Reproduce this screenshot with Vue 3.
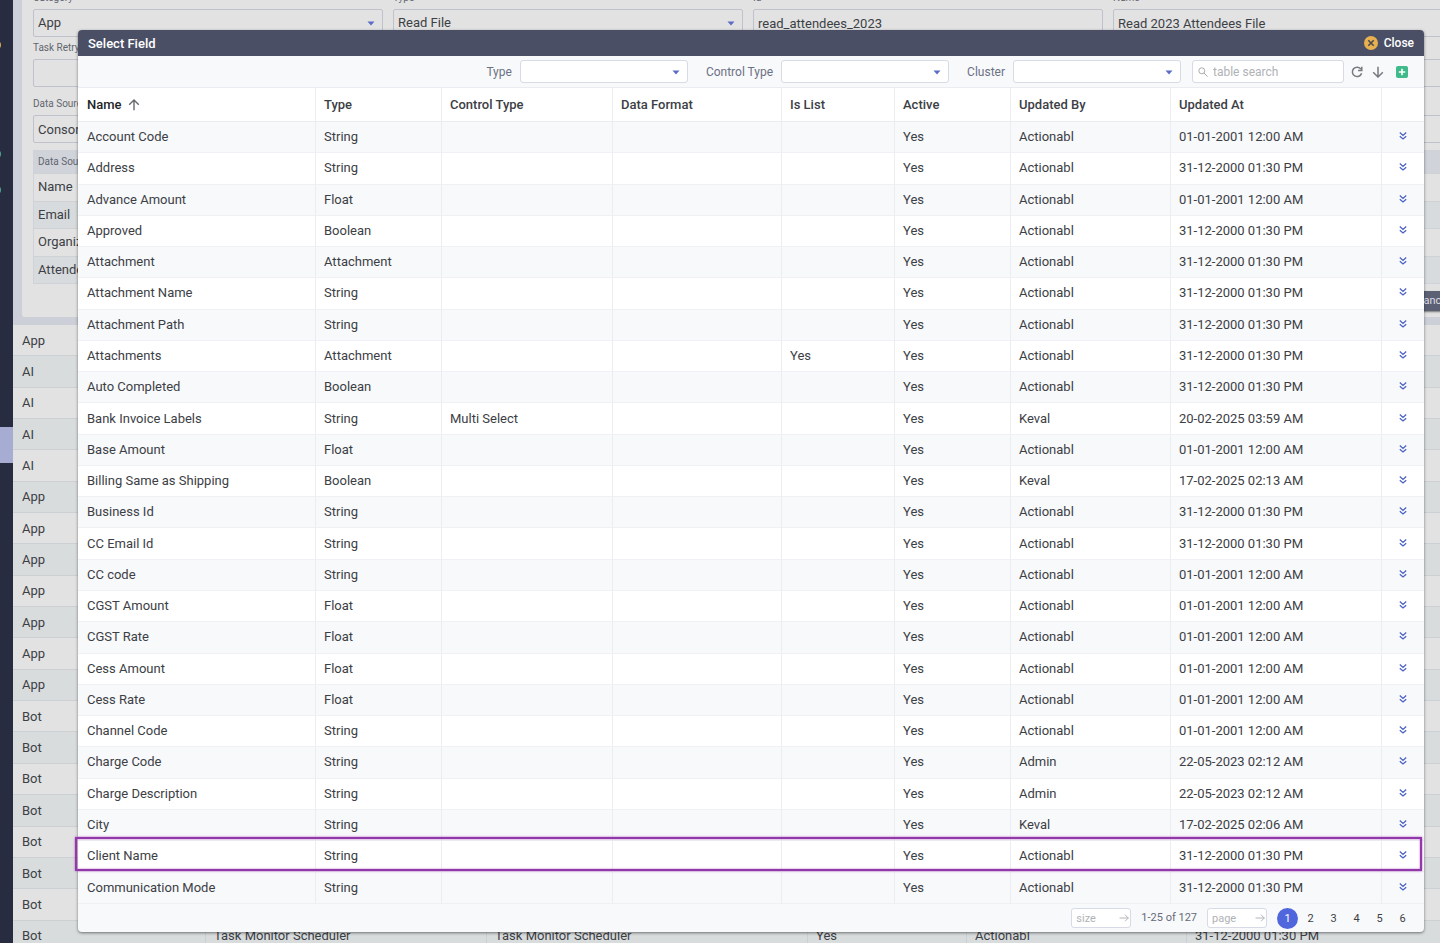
<script setup>
const S = 'String', F = 'Float', B = 'Boolean', A = 'Attachment'
const P = '31-12-2000 01:30 PM', M = '01-01-2001 12:00 AM'
const rows = [
  ['Account Code', S, M],
  ['Address', S, P],
  ['Advance Amount', F, M],
  ['Approved', B, P],
  ['Attachment', A, P],
  ['Attachment Name', S, P],
  ['Attachment Path', S, P],
  ['Attachments', A, P, 'Actionabl', '', 'Yes'],
  ['Auto Completed', B, P],
  ['Bank Invoice Labels', S, '20-02-2025 03:59 AM', 'Keval', 'Multi Select'],
  ['Base Amount', F, M],
  ['Billing Same as Shipping', B, '17-02-2025 02:13 AM', 'Keval'],
  ['Business Id', S, P],
  ['CC Email Id', S, P],
  ['CC code', S, M],
  ['CGST Amount', F, M],
  ['CGST Rate', F, M],
  ['Cess Amount', F, M],
  ['Cess Rate', F, M],
  ['Channel Code', S, M],
  ['Charge Code', S, '22-05-2023 02:12 AM', 'Admin'],
  ['Charge Description', S, '22-05-2023 02:12 AM', 'Admin'],
  ['City', S, '17-02-2025 02:06 AM', 'Keval'],
  ['Client Name', S, P],
  ['Communication Mode', S, P]
].map(([name, type, at, by = 'Actionabl', control = '', list = '']) => ({ name, type, control, list, by, at }))

const tasks = ['App', ...Array(4).fill('AI'), ...Array(7).fill('App'), ...Array(8).fill('Bot')]
  .map((category, i) => (i === 19
    ? [category, 'Task Monitor Scheduler', 'Task Monitor Scheduler', 'Yes', 'Actionabl', P]
    : [category, '', '', '', '', '']))

const filters = [
  { id: 'f-type', label: 'Type' },
  { id: 'f-control', label: 'Control Type' },
  { id: 'f-cluster', label: 'Cluster' }
]
const headings = ['Type', 'Control Type', 'Data Format', 'Is List', 'Active', 'Updated By', 'Updated At']
</script>

<template>
  <div class="app">
    <nav class="rail" aria-label="Main">
      <i class="dot amber"></i>
      <i class="dot teal"></i>
      <i class="dot teal second"></i>
      <a href="#" class="current" aria-label="Tasks"></a>
    </nav>

    <main class="page">
      <section class="card">
        <form class="form" @submit.prevent>
          <div class="field">
            <label for="category">Category</label>
            <div class="pick">
              <select id="category"><option>App</option></select>
              <svg viewBox="0 0 8 5"><path d="M0.5 0.5h7L4 4.5z" /></svg>
            </div>
          </div>
          <div class="field">
            <label for="type">Type</label>
            <div class="pick">
              <select id="type"><option>Read File</option></select>
              <svg viewBox="0 0 8 5"><path d="M0.5 0.5h7L4 4.5z" /></svg>
            </div>
          </div>
          <div class="field">
            <label for="ident">Id</label>
            <input id="ident" value="read_attendees_2023" />
          </div>
          <div class="field">
            <label for="fname">Name</label>
            <input id="fname" value="Read 2023 Attendees File" />
          </div>
          <div class="field wide">
            <label for="retry">Task Retry</label>
            <input id="retry" />
          </div>
          <div class="field wide last">
            <label for="source">Data Source</label>
            <input id="source" value="Consor" />
          </div>
        </form>
        <table class="sources">
          <thead><tr><th>Data Source</th></tr></thead>
          <tbody>
            <tr v-for="n in ['Name', 'Email', 'Organization', 'Attendees']" :key="n"><td>{{ n }}</td></tr>
          </tbody>
        </table>
        <div class="actions"><button type="button">Cancel</button></div>
      </section>

      <div class="tasks-wrap">
        <table class="tasks">
          <colgroup><col class="t1" /><col class="t2" /><col class="t3" /><col class="t4" /><col class="t5" /><col /></colgroup>
          <tbody>
            <tr v-for="(t, i) in tasks" :key="i"><td v-for="(c, j) in t" :key="j">{{ c }}</td></tr>
          </tbody>
        </table>
      </div>
    </main>

    <section class="modal" role="dialog" aria-labelledby="title">
      <header class="bar">
        <h1 id="title">Select Field</h1>
        <button type="button" class="close">
          <svg viewBox="0 0 14 14"><circle cx="7" cy="7" r="7" fill="#e8b04f" /><path d="M4.3 4.3l5.4 5.4M9.7 4.3l-5.4 5.4" stroke="#4b4a50" stroke-width="1.6" fill="none" /></svg>
          Close
        </button>
      </header>

      <div class="tools">
        <div v-for="f in filters" :key="f.id" class="filter">
          <label :for="f.id">{{ f.label }}</label>
          <div class="pick">
            <select :id="f.id"><option></option></select>
            <svg viewBox="0 0 8 5"><path d="M0.5 0.5h7L4 4.5z" /></svg>
          </div>
        </div>
        <div class="search">
          <svg viewBox="0 0 10 10"><circle cx="3.8" cy="3.8" r="3" /><path d="M6 6l3.6 3.6" /></svg>
          <input type="search" placeholder="table search" aria-label="table search" />
        </div>
        <button type="button" class="icon" aria-label="Refresh">
          <svg viewBox="0 0 12 12"><path d="M10 3.2A4.7 4.7 0 1 0 10.6 7.2M10.8 0.8v3.7H7" /></svg>
        </button>
        <button type="button" class="icon" aria-label="Download">
          <svg viewBox="0 0 12 12"><path d="M6 0.8v10M1.2 6.2L6 11l4.8-4.8" /></svg>
        </button>
        <button type="button" class="icon add" aria-label="Add">
          <svg viewBox="0 0 12 12"><rect width="12" height="12" rx="2" fill="#3fba8b" stroke="none" /><path d="M6 2.8v6.4M2.8 6h6.4" stroke="#fff" stroke-width="1.6" /></svg>
        </button>
      </div>

      <div class="grid-wrap">
        <table class="grid">
          <colgroup>
            <col class="c-name" /><col class="c-type" /><col class="c-control" /><col class="c-format" /><col class="c-list" />
            <col class="c-active" /><col class="c-by" /><col class="c-at" /><col class="c-more" />
          </colgroup>
          <thead>
            <tr>
              <th class="sorted">Name<svg viewBox="0 0 12 12"><path d="M6 11.2V1M1.2 5.8L6 1l4.8 4.8" /></svg></th>
              <th v-for="h in headings" :key="h">{{ h }}</th>
              <th></th>
            </tr>
          </thead>
          <tbody>
            <tr v-for="r in rows" :key="r.name" :class="{ marked: r.name === 'Client Name' }">
              <td>{{ r.name }}</td>
              <td>{{ r.type }}</td>
              <td>{{ r.control }}</td>
              <td></td>
              <td>{{ r.list }}</td>
              <td>Yes</td>
              <td>{{ r.by }}</td>
              <td>{{ r.at }}</td>
              <td class="more">
                <button type="button" aria-label="More">
                  <svg viewBox="0 0 8 8"><path d="M0.8 0.6L4 3.4l3.2-2.8M0.8 4.2L4 7l3.2-2.8" /></svg>
                </button>
              </td>
            </tr>
          </tbody>
        </table>
      </div>

      <footer class="pager">
        <div class="jump">
          <input placeholder="size" aria-label="size" />
          <svg viewBox="0 0 10 8"><path d="M0.5 4h9M6 0.7L9.3 4 6 7.3" /></svg>
        </div>
        <span class="range">1-25 of 127</span>
        <div class="jump">
          <input placeholder="page" aria-label="page" />
          <svg viewBox="0 0 10 8"><path d="M0.5 4h9M6 0.7L9.3 4 6 7.3" /></svg>
        </div>
        <div class="pages">
          <button v-for="n in 6" :key="n" type="button" :class="{ on: n === 1 }">{{ n }}</button>
        </div>
      </footer>
    </section>
  </div>
</template>

<style>
body { overflow: hidden; }
</style>

<style scoped>
* { box-sizing: border-box; }
.app {
  position: relative;
  display: flex;
  height: 100vh;
  overflow: hidden;
  font-family: Roboto, "Liberation Sans", sans-serif;
  font-size: 13px;
  line-height: 16px;
  color: #3c4045;
}
button, input, select { font: inherit; color: inherit; margin: 0; }
button { border: 0; padding: 0; background: none; cursor: pointer; }
input, select { outline: 0; min-width: 0; width: 100%; }
table { border-collapse: separate; border-spacing: 0; width: 100%; table-layout: fixed; }
svg { display: block; flex: none; fill: none; stroke: currentColor; }

.rail { position: relative; flex: none; width: 13px; background: #282c40; overflow: hidden; }
.current { position: absolute; left: 0; right: 0; top: 427px; height: 36px; background: #a7add2; }
.dot { position: absolute; left: -7px; top: 41px; width: 8px; height: 8px; border-radius: 4px; }
.amber { background: #d9a550; }
.teal { background: #4fa692; top: 150px; }
.second { top: 186px; }

.page { flex: 1; min-width: 0; display: flex; flex-direction: column; background: #cccfd8; overflow: hidden; }
.card {
  flex: none;
  width: calc(100% + 25px);
  margin: -20px 0 8px 9px;
  padding: 10px 11px 6px;
  background: #e2e2e2;
  border-radius: 3px;
}
.form { display: grid; grid-template-columns: repeat(4, 1fr); column-gap: 10px; }
.field label { display: block; height: 19px; font-size: 10px; line-height: 16px; color: #62666f; }
.field.wide { grid-column: 1 / -1; padding-top: 3px; }
.field.last { padding-top: 9px; }
.field input, .field select {
  display: block;
  height: 28px;
  padding: 0 4px;
  border: 1px solid #bfc1cc;
  border-radius: 2px;
  background: transparent;
  appearance: none;
}
.pick { position: relative; }
.pick svg { position: absolute; right: 8px; top: 50%; margin-top: -2px; width: 8px; height: 5px; fill: #5a6cc6; stroke: none; }

.sources { height: 134px; margin-top: 7px; border: 1px solid #cfd2d8; }
.sources th { height: 22px; padding: 0 4px; text-align: left; font-size: 10px; line-height: 12px; font-weight: 400; background: #d0d3da; color: #62666f; }
.sources td { padding: 0 4px; border-top: 1px solid #cfd2d4; }
.sources tr:nth-child(even) td { background: #d8dbdd; }
.actions { display: flex; justify-content: flex-end; margin-top: 7px; }
.actions button { width: 60px; height: 20px; background: #5c6074; color: #dcdde2; font-size: 11px; border-radius: 2px; box-shadow: 0 1px 2px #777; }

.tasks-wrap { flex: 1; min-height: 0; margin-bottom: -9px; }
.tasks { height: 100%; }
.tasks td { padding: 1px 8px 0; border-bottom: 1px solid #cdd0d2; white-space: nowrap; background: #e2e2e2; }
.tasks td:first-child { padding-left: 9px; }
.tasks tr:nth-child(even) td { background: #d9dcdd; }
.tasks tr:last-child td + td { border-left: 1px solid #cdd0d2; }
.t1 { width: 192px; }
.t2 { width: 281px; }
.t3 { width: 321px; }
.t4 { width: 159px; }
.t5 { width: 220px; }

.modal {
  position: absolute;
  inset: 30px 16px 11px 78px;
  display: flex;
  flex-direction: column;
  background: #f8f9fb;
  border-radius: 4px;
  box-shadow: 0 1px 3px rgba(0, 0, 0, 0.5);
}
.bar {
  flex: none;
  display: flex;
  align-items: center;
  justify-content: space-between;
  height: 26px;
  padding: 0 10px;
  background: #4a4f66;
  color: #fff;
  border-radius: 4px 4px 0 0;
}
.bar h1 { margin: 0; padding-top: 1px; font-size: 13px; font-weight: 500; }
.close { display: flex; align-items: center; gap: 6px; font-size: 12px; font-weight: 500; }
.close svg { width: 14px; height: 14px; stroke: none; }

.tools { flex: none; display: flex; align-items: center; justify-content: flex-end; height: 32px; padding-right: 16px; border-bottom: 1px solid #eaecf1; }
.filter { display: flex; align-items: center; gap: 8px; margin-left: 18px; }
.filter label { font-size: 12px; color: #6c7184; }
.filter .pick { width: 168px; }
.filter select, .search input, .jump input {
  display: block;
  height: 23px;
  border: 1px solid #d8dbe5;
  border-radius: 3px;
  background: #fff;
  appearance: none;
}
.search { position: relative; width: 152px; margin: 0 7px 0 11px; }
.search input { padding: 0 8px 0 20px; font-size: 12px; }
.search svg { position: absolute; left: 6px; top: 7px; width: 10px; height: 10px; color: #a9abb0; }
input::placeholder { color: #b0b2b6; opacity: 1; }
.icon { margin-right: 9px; color: #777a7e; }
.icon svg { width: 12px; height: 12px; stroke-width: 1.5; }
.icon.add { margin: 0 0 0 3px; }

.grid-wrap { flex: 1; min-height: 0; }
.grid { height: 100%; }
.grid th { height: 34px; padding: 0 8px; text-align: left; font-weight: 500; background: #fff; border-bottom: 1px solid #eaecf1; }
.grid th svg { display: inline-block; width: 12px; height: 12px; margin-left: 6px; vertical-align: -2px; color: #66696d; stroke-width: 1.4; }
.grid th.sorted { color: #222529; }
.grid th + th, .grid td + td { border-left: 1px solid #ebedf1; }
.grid td { padding: 0 8px; border-bottom: 1px solid #eff1f5; white-space: nowrap; background: #fff; }
.grid td:first-child, .grid th:first-child { padding-left: 9px; }
.grid tbody tr:nth-child(odd) td { background: #f8f9fb; }
.grid td.more { padding-bottom: 2px; }
.more button { display: block; margin: 0 auto; }
.more svg { width: 8px; height: 8px; color: #4c61c2; stroke-width: 1.3; }
.marked { position: relative; }
.marked::after {
  content: "";
  position: absolute;
  inset: -4px 2px 1px -3px;
  border: 2px solid #9139a8;
  box-shadow: 0 0 2px #b05cc4, inset 0 0 2px #b05cc4;
  pointer-events: none;
}
.c-name { width: 237px; }
.c-type { width: 126px; }
.c-control { width: 171px; }
.c-format { width: 169px; }
.c-list { width: 113px; }
.c-active { width: 116px; }
.c-by { width: 160px; }
.c-at { width: 211px; }
.c-more { width: 43px; }

.pager { flex: none; display: flex; align-items: center; justify-content: flex-end; height: 28px; padding-right: 11px; gap: 10px; }
.jump { position: relative; width: 60px; }
.jump input { height: 20px; padding: 0 18px 0 4px; font-size: 11px; }
.jump svg { position: absolute; right: 2px; top: 6px; width: 10px; height: 8px; color: #b3b5b9; }
.range { font-size: 11px; color: #666b78; }
.pages { display: flex; gap: 2px; }
.pages button { width: 21px; height: 21px; border-radius: 50%; font-size: 11px; line-height: 21px; }
.pages .on { background: #4f66dc; color: #fff; }
</style>
